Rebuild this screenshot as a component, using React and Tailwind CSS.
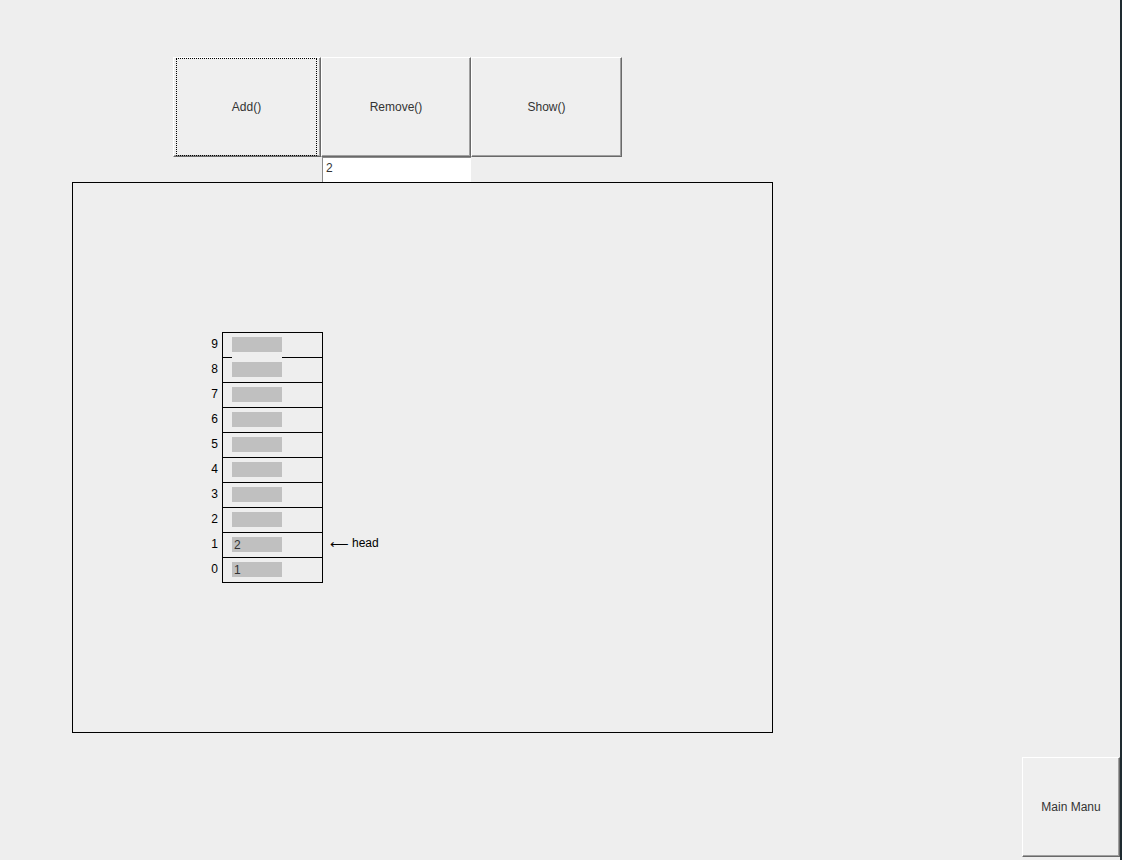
import React from 'react';

const FONT = { fontFamily: '"Liberation Sans", Arial, sans-serif' };

function SwingButton({ label, focused = false, className = '' }) {
    return (
        <div
            className={`flex items-center justify-center bg-[#efefef] border-t border-l border-white border-b border-r border-b-[#696969] border-r-[#696969] shadow-[inset_-1px_-1px_0_#a0a0a0] text-[12px] text-[#333333] ${className}`}
        >
            {focused ? (
                <div className="w-full h-full m-[2px] mr-[3px] mb-[3px] border border-dotted border-black flex items-center justify-center">
                    {label}
                </div>
            ) : (
                label
            )}
        </div>
    );
}

export default function App() {
    const slots = [9, 8, 7, 6, 5, 4, 3, 2, 1, 0];
    const values = { 1: '2', 0: '1' };

    return (
        <div style={FONT} className="w-[1122px] h-[860px] bg-[#eeeeee] flex flex-col border-r-2 border-[#1e2a30] overflow-hidden">
            {/* toolbar */}
            <div className="flex ml-[173px] mt-[57px]">
                <SwingButton label="Add()" focused className="w-[148px] h-[100px]" />
                <SwingButton label="Remove()" className="w-[150px] h-[100px]" />
                <SwingButton label="Show()" className="w-[151px] h-[100px]" />
            </div>
            <div className="ml-[322px] w-[149px] h-[25px] bg-white border-t border-l border-[#8a8a8a] text-[12px] text-[#333333] pl-[3px] leading-[20px]">
                2
            </div>

            {/* canvas */}
            <div className="ml-[72px] w-[701px] h-[551px] border border-black pt-[149px] pl-[131px]">
                <div className="flex flex-col">
                    {slots.map((i) => (
                        <div key={i} className="flex items-stretch h-[25px]">
                            <div className="w-[14px] text-right text-[12px] text-black pt-[5px] leading-[14px]">
                                {i}
                            </div>
                            <div className="w-[4px]" />
                            <div
                                className={`relative w-[101px] border-l border-r border-t border-black ${i === 0 ? 'h-[26px] border-b' : 'h-[25px]'}`}
                            >
                                {i === 8 && (
                                    <div className="absolute -top-[1px] left-[9px] w-[50px] h-[1px] bg-[#eeeeee]" />
                                )}
                                <div className="mt-[4px] ml-[9px] w-[50px] h-[15px] bg-[#c0c0c0] text-[12px] text-[#333333] pl-[2px] leading-[16px]">
                                    {values[i] || ''}
                                </div>
                            </div>
                            {i === 1 && (
                                <div className="flex items-start ml-[7px] text-[12px] text-black">
                                    <span className="text-[13px] leading-[14px] mt-[6px]">⟵</span>
                                    <span className="ml-[3px] leading-[14px] mt-[4px]">head</span>
                                </div>
                            )}
                        </div>
                    ))}
                </div>
            </div>

            {/* bottom right */}
            <div className="flex justify-end mt-[24px]">
                <SwingButton label="Main Manu" className="w-[98px] h-[100px]" />
            </div>
        </div>
    );
}
